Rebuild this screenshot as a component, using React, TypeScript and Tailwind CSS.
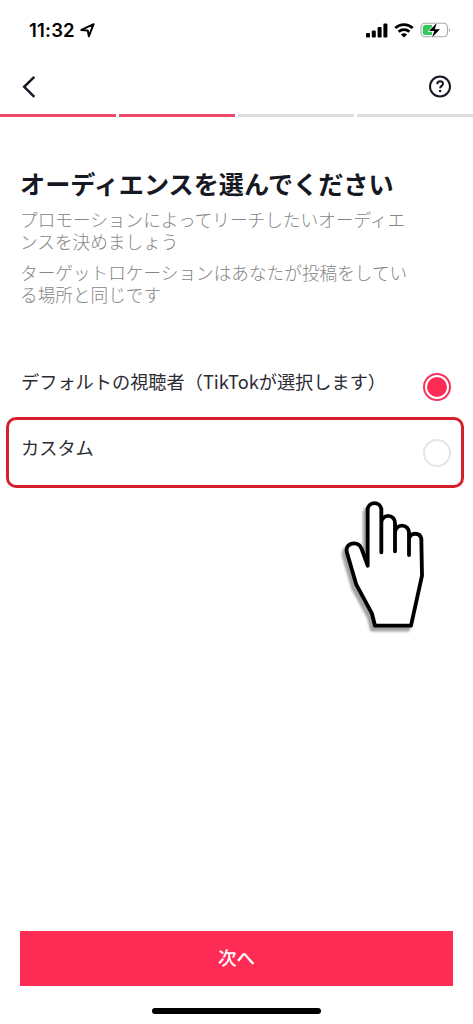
import { useState } from "react";

interface OptionProps {
  label: string;
  selected: boolean;
  onSelect: () => void;
}

const StatusBar: React.FC = () => {
  return (
    <div className="flex h-[60px] items-center justify-between pl-[29px] pr-[22px]">
      <div className="flex items-center gap-[5px]">
        <span className="font-['Inter',sans-serif] text-[18.5px] font-semibold leading-6 tracking-[0.2px] text-black">
          11:32
        </span>
        <svg className="h-[15px] w-[15px]" viewBox="0 0 15 15" fill="none">
          <path
            d="M13.6 1.2 8.9 13.2 7.7 7.4 1.4 6.9Z"
            stroke="#000"
            strokeWidth="2"
            strokeLinejoin="round"
          />
        </svg>
      </div>
      <div className="flex items-center">
        <svg className="h-[15px] w-[22px]" viewBox="0 0 22 15">
          <rect x="0" y="10" width="4" height="4.5" rx="1" />
          <rect x="5.8" y="7.5" width="4" height="7" rx="1" />
          <rect x="11.6" y="4" width="4" height="10.5" rx="1" />
          <rect x="17.4" y="0.5" width="4" height="14" rx="1" />
        </svg>
        <svg
          className="ml-[6px] h-[15px] w-5"
          viewBox="0 0 20 15"
          fill="none"
          stroke="#000"
          strokeWidth="2.7"
        >
          <path d="M1.3 5.1a12.6 12.6 0 0 1 17.4 0" />
          <path d="M4.6 8.7a7.9 7.9 0 0 1 10.8 0" />
          <path
            d="M10 14.6 6.9 11.6a4.6 4.6 0 0 1 6.2 0Z"
            fill="#000"
            stroke="none"
          />
        </svg>
        <svg className="ml-[6px] h-[18px] w-[31px]" viewBox="0 0 31 18">
          <rect
            x="1"
            y="2.2"
            width="26.5"
            height="13.6"
            rx="4"
            fill="#fff"
            stroke="#aaa"
            strokeWidth="1.1"
          />
          <path
            d="M5.3 4H12v10H5.3A2.5 2.5 0 0 1 2.8 11.5v-5A2.5 2.5 0 0 1 5.3 4Z"
            fill="#34c759"
          />
          <path d="M29 7v4c1.5-.7 1.5-3.3 0-4Z" fill="#aaa" />
          <path
            d="M17 1.7 9.1 10h5.2l-2.4 6.5L20 8.2h-5.3Z"
            stroke="#fff"
            strokeWidth="1.4"
            paintOrder="stroke"
          />
        </svg>
      </div>
    </div>
  );
};

const Option: React.FC<OptionProps> = ({ label, selected, onSelect }) => {
  return (
    <button
      type="button"
      role="radio"
      aria-checked={selected}
      onClick={onSelect}
      className="flex w-full items-start justify-between text-left"
    >
      <span className="text-[18.2px] leading-6 text-[#2b2b33]">{label}</span>
      {selected ? (
        <span className="mt-1 flex size-7 items-center justify-center rounded-full border-2 border-[#f5355c]">
          <span className="size-5 rounded-full bg-[#fe2c55]" />
        </span>
      ) : (
        <span className="mt-1 size-7 rounded-full border-2 border-[#e6e6e6]" />
      )}
    </button>
  );
};

const PointingHand: React.FC = () => {
  const outline =
    "M113 227V56a21 21 0 0 1 41 0V187 98a20 20 0 0 1 41 0V184 128a21 21 0 0 1 42 0V195 146a19 19 0 0 1 37 0L276 257 243 407H135L126 371 79 284 51 188C46 170 58 160 72 160 84 160 91 166 95 177Z";

  return (
    <svg
      className="pointer-events-none absolute left-[330px] top-[490px] h-[150px] w-[110px]"
      viewBox="0 0 330 450"
      strokeLinejoin="round"
      strokeLinecap="round"
      strokeWidth="11.5"
    >
      <path
        d={outline}
        transform="translate(-9 12)"
        fill="#a3a3a3"
        stroke="#a3a3a3"
        className="blur-[3px]"
      />
      <path d={outline} fill="#fff" stroke="#000" />
    </svg>
  );
};

const App: React.FC = () => {
  const [audience, setAudience] = useState("default");
  const steps = [true, true, false, false];

  return (
    <div className="relative flex h-[1024px] w-[473px] flex-col bg-white font-['Noto_Sans_CJK_JP',sans-serif]">
      <StatusBar />

      <header className="flex h-[54px] items-center justify-between px-[21px]">
        <button type="button" aria-label="戻る">
          <svg className="h-6 w-4" viewBox="0 0 16 24" fill="none">
            <path
              d="M13.3 1.8 3.2 11.8l10.1 10.1"
              stroke="#161823"
              strokeWidth="2.5"
            />
          </svg>
        </button>
        <button type="button" aria-label="ヘルプ">
          <svg className="h-6 w-6" viewBox="0 0 24 24" fill="none">
            <circle
              cx="12"
              cy="11.5"
              r="10"
              stroke="#161823"
              strokeWidth="2"
            />
            <path
              d="M9.2 9.1c.1-1.8 1.3-2.8 2.9-2.8 1.7 0 2.9 1 2.9 2.5 0 2-2.9 2.2-2.9 4.5"
              stroke="#161823"
              strokeWidth="2"
            />
            <circle cx="12.1" cy="16" r="1.3" fill="#161823" />
          </svg>
        </button>
      </header>

      <div className="flex gap-[3px]">
        {steps.map((done, index) => (
          <div
            key={index}
            className={
              done ? "h-[3px] flex-1 bg-[#ed4a6c]" : "h-[3px] flex-1 bg-[#dedede]"
            }
          />
        ))}
      </div>

      <main className="flex flex-1 flex-col">
        <div className="px-5 pt-12">
          <h1 className="whitespace-nowrap text-[25.15px] font-bold leading-9 text-[#161823]">
            オーディエンスを選んでください
          </h1>
          <div className="mt-2 space-y-[10px] whitespace-nowrap text-[17.65px] font-light leading-[21.5px] text-[#858585]">
            <p>
              プロモーションによってリーチしたいオーディエ
              <br />
              ンスを決めましょう
            </p>
            <p>
              ターゲットロケーションはあなたが投稿をしてい
              <br />
              る場所と同じです
            </p>
          </div>
        </div>

        <div role="radiogroup" className="mt-16">
          <div className="pl-[21px] pr-[22px]">
            <Option
              label="デフォルトの視聴者（TikTokが選択します）"
              selected={audience === "default"}
              onSelect={() => setAudience("default")}
            />
          </div>
          <div className="ml-[6px] mr-[9px] mt-4 h-[71px] rounded-[10px] border-3 border-[#d4202a] pl-3 pr-[10px] pt-[15px]">
            <Option
              label="カスタム"
              selected={audience === "custom"}
              onSelect={() => setAudience("custom")}
            />
          </div>
        </div>
      </main>

      <footer className="flex flex-col items-center px-5">
        <button
          type="button"
          className="h-[55px] w-full bg-[#fe2c55] pb-0.5 text-[18.5px] font-medium text-white"
        >
          次へ
        </button>
        <div className="mb-[10px] mt-[22px] h-[6px] w-[169px] rounded-full bg-black" />
      </footer>

      <PointingHand />
    </div>
  );
};

export default App;
